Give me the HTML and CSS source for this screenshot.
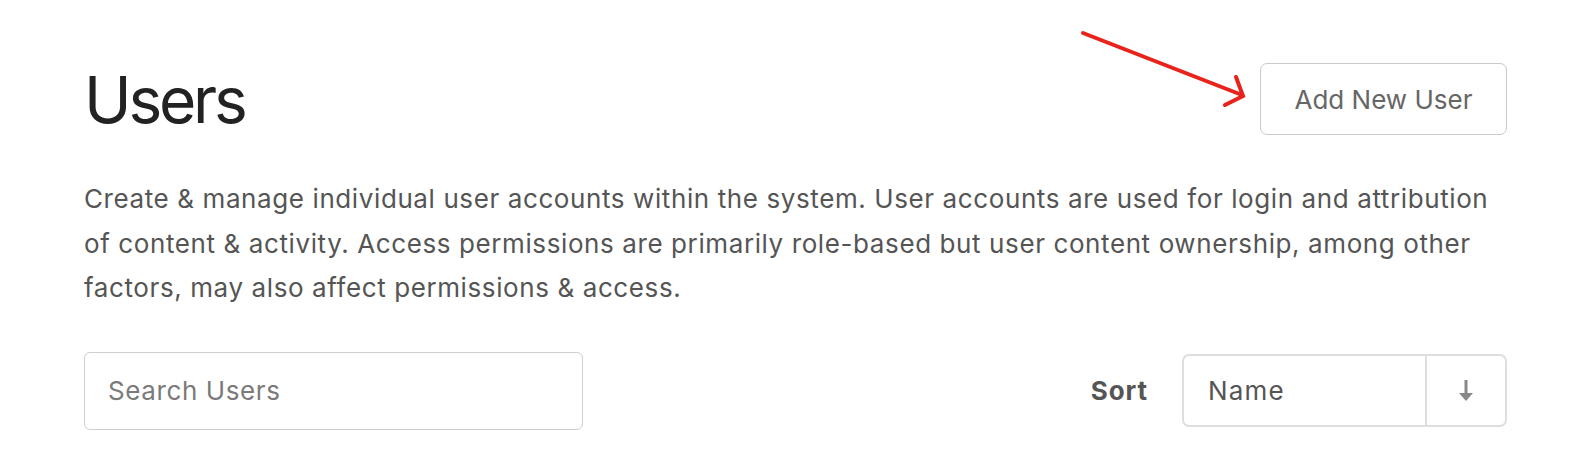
FILE: index.html
```html
<!DOCTYPE html>
<html lang="en">
<head>
<meta charset="utf-8">
<title>Users</title>
<link rel="stylesheet" href="styles.css">
</head>
<body>
<div class="page">
  <header class="header">
    <h1 class="title">Users</h1>
    <button class="btn">Add New User</button>
  </header>
  <p class="intro">Create &amp; manage individual user accounts within the system. User accounts are used for login and attribution of content &amp; activity. Access permissions are primarily role-based but user content ownership, among other factors, may also affect permissions &amp; access.</p>
  <div class="controls">
    <input class="search" type="text" placeholder="Search Users">
    <div class="sort">
      <span class="sort-label">Sort</span>
      <div class="sort-box">
        <span class="sort-value">Name</span>
        <span class="sort-dir">
          <svg width="16" height="22" viewBox="0 0 16 22"><path d="M8 0v16" stroke="#888" stroke-width="3" fill="none"/><path d="M1 13l7 8 7-8z" fill="#888"/></svg>
        </span>
      </div>
    </div>
  </div>
  <svg class="annot" width="190" height="100" viewBox="0 0 190 100">
    <path d="M13 13 L172 75" stroke="#e8231b" stroke-width="4" stroke-linecap="round" fill="none"/>
    <path d="M166 57 L173 76 L155 85" stroke="#e8231b" stroke-width="4" stroke-linecap="round" stroke-linejoin="miter" fill="none"/>
  </svg>
</div>
</body>
</html>
```
FILE: styles.css
```css
html, body {
  margin: 0;
  padding: 0;
  background: #fff;
}
body {
  font-family: Inter, "Noto Sans", "Liberation Sans", sans-serif;
  color: #555;
}
.page {
  position: relative;
  padding: 63px 89px 0 84px;
}
.header {
  display: flex;
  align-items: center;
  justify-content: space-between;
  height: 72px;
}
.title {
  margin: 0;
  font-size: 64px;
  font-weight: 400;
  line-height: 72px;
  color: #222;
  letter-spacing: -3.2px;
  padding-top: 2px;
}
.btn {
  width: 247px;
  height: 72px;
  border: 1.5px solid #cacaca;
  border-radius: 7px;
  background: #fff;
  font-family: inherit;
  font-size: 26px;
  color: #666;
  padding: 0;
}
.intro {
  margin: 42px 0 0;
  font-size: 26px;
  line-height: 44.5px;
  letter-spacing: 0.6px;
  color: #555;
}
.controls {
  display: flex;
  align-items: center;
  justify-content: space-between;
  margin-top: 41px;
}
.search {
  box-sizing: border-box;
  width: 499px;
  height: 78px;
  border: 1.5px solid #cfcfcf;
  border-radius: 6px;
  padding: 0 23px;
  font-family: inherit;
  font-size: 26px;
  letter-spacing: 0.6px;
  color: #555;
  outline: none;
}
.search::placeholder {
  color: #7a7a7a;
}
.sort {
  display: flex;
  align-items: center;
  gap: 34px;
}
.sort-label {
  font-size: 26px;
  font-weight: 700;
  letter-spacing: 0.9px;
  color: #555;
}
.sort-box {
  box-sizing: border-box;
  display: flex;
  width: 325px;
  height: 73px;
  border: 2.5px solid #dedede;
  border-radius: 7px;
}
.sort-value {
  flex: 1;
  display: flex;
  align-items: center;
  padding-left: 24px;
  font-size: 26px;
  letter-spacing: 1.2px;
  color: #555;
  border-right: 2.5px solid #dedede;
}
.sort-dir {
  width: 78px;
  display: flex;
  align-items: center;
  justify-content: center;
}
.annot {
  position: absolute;
  left: 1070px;
  top: 20px;
}
```
